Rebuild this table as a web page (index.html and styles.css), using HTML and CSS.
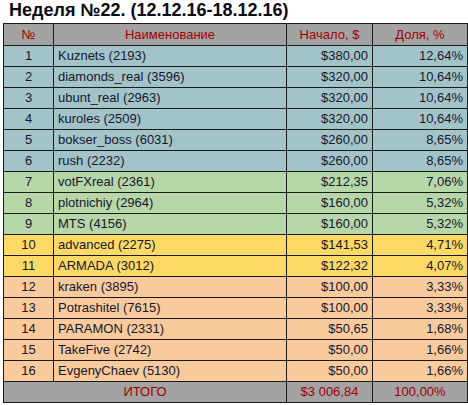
FILE: index.html
```html
<!DOCTYPE html>
<html lang="ru">
<head>
<meta charset="utf-8">
<link rel="stylesheet" href="styles.css">
</head>
<body>
<h1 class="title">Неделя №22. (12.12.16-18.12.16)</h1>
<table class="rating">
<colgroup><col class="c-num"><col class="c-name"><col class="c-start"><col class="c-share"></colgroup>
<thead>
<tr class="head"><th>№</th><th>Наименование</th><th>Начало, $</th><th>Доля, %</th></tr>
</thead>
<tbody>
<tr class="blue"><td class="num">1</td><td class="name">Kuznets (2193)</td><td class="val">$380,00</td><td class="val">12,64%</td></tr>
<tr class="blue"><td class="num">2</td><td class="name">diamonds_real (3596)</td><td class="val">$320,00</td><td class="val">10,64%</td></tr>
<tr class="blue"><td class="num">3</td><td class="name">ubunt_real (2963)</td><td class="val">$320,00</td><td class="val">10,64%</td></tr>
<tr class="blue"><td class="num">4</td><td class="name">kuroles (2509)</td><td class="val">$320,00</td><td class="val">10,64%</td></tr>
<tr class="blue"><td class="num">5</td><td class="name">bokser_boss (6031)</td><td class="val">$260,00</td><td class="val">8,65%</td></tr>
<tr class="blue"><td class="num">6</td><td class="name">rush (2232)</td><td class="val">$260,00</td><td class="val">8,65%</td></tr>
<tr class="green"><td class="num">7</td><td class="name">votFXreal (2361)</td><td class="val">$212,35</td><td class="val">7,06%</td></tr>
<tr class="green"><td class="num">8</td><td class="name">plotnichiy (2964)</td><td class="val">$160,00</td><td class="val">5,32%</td></tr>
<tr class="green"><td class="num">9</td><td class="name">MTS (4156)</td><td class="val">$160,00</td><td class="val">5,32%</td></tr>
<tr class="yellow"><td class="num">10</td><td class="name">advanced (2275)</td><td class="val">$141,53</td><td class="val">4,71%</td></tr>
<tr class="yellow"><td class="num">11</td><td class="name">ARMADA (3012)</td><td class="val">$122,32</td><td class="val">4,07%</td></tr>
<tr class="peach"><td class="num">12</td><td class="name">kraken (3895)</td><td class="val">$100,00</td><td class="val">3,33%</td></tr>
<tr class="peach"><td class="num">13</td><td class="name">Potrashitel (7615)</td><td class="val">$100,00</td><td class="val">3,33%</td></tr>
<tr class="peach"><td class="num">14</td><td class="name">PARAMON (2331)</td><td class="val">$50,65</td><td class="val">1,68%</td></tr>
<tr class="peach"><td class="num">15</td><td class="name">TakeFive (2742)</td><td class="val">$50,00</td><td class="val">1,66%</td></tr>
<tr class="peach"><td class="num">16</td><td class="name">EvgenyChaev (5130)</td><td class="val">$50,00</td><td class="val">1,66%</td></tr>
</tbody>
<tfoot>
<tr class="total"><td colspan="2">ИТОГО</td><td>$3 006,84</td><td>100,00%</td></tr>
</tfoot>
</table>
</body>
</html>
```
FILE: styles.css
```css
html, body {
  margin: 0;
  padding: 0;
  background: #ffffff;
}
body {
  padding: 0 2px 0 3px;
  font-family: "Liberation Sans", Arial, sans-serif;
}
.title {
  margin: 0;
  padding: 0 0 0 6px;
  height: 23px;
  font-size: 18px;
  line-height: 21px;
  font-weight: bold;
  color: #0a0a14;
}
.rating {
  border-collapse: collapse;
  table-layout: fixed;
  width: 464px;
  font-size: 13px;
  color: #16162e;
}
.c-num { width: 50px; }
.c-name { width: 233px; }
.c-start { width: 86px; }
.c-share { width: 95px; }
.rating th,
.rating td {
  border: 1px solid #1a1a1a;
  padding: 0 4px;
  white-space: nowrap;
  overflow: hidden;
}
.rating td {
  height: 20px;
  line-height: 20px;
}
.rating th {
  height: 21px;
  line-height: 21px;
  font-weight: normal;
  text-align: center;
  color: #a00000;
  background: #a3a3a3;
}
.num { text-align: center; }
.name { text-align: left; }
.val { text-align: right; }
.blue td { background: #a2c4c9; }
.green td { background: #b6d7a8; }
.yellow td { background: #ffd966; }
.peach td { background: #f9cb9c; }
.total td {
  background: #a3a3a3;
  color: #a00000;
  text-align: center;
}
```
